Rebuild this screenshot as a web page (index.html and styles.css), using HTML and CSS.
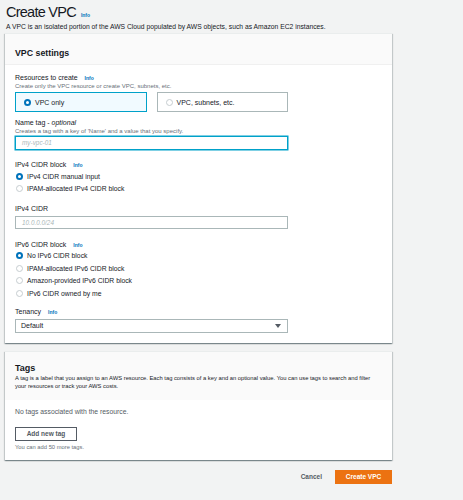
FILE: index.html
```html
<!DOCTYPE html>
<html>
<head>
<meta charset="utf-8">
<link rel="stylesheet" href="styles.css">
</head>
<body>
<div class="page">
  <div class="title-row">
    <h1 class="title">Create VPC</h1>
    <a class="info info-title">Info</a>
  </div>
  <p class="subtitle">A VPC is an isolated portion of the AWS Cloud populated by AWS objects, such as Amazon EC2 instances.</p>

  <section class="panel">
    <div class="panel-head">
      <h2 class="panel-title">VPC settings</h2>
    </div>
    <div class="panel-body">
      <div class="label">Resources to create <a class="info">Info</a></div>
      <div class="desc">Create only the VPC resource or create VPC, subnets, etc.</div>
      <div class="tiles">
        <div class="tile tile-on"><span class="radio on"></span>VPC only</div>
        <div class="tile"><span class="radio"></span>VPC, subnets, etc.</div>
      </div>

      <div class="label lbl-name">Name tag - <i>optional</i></div>
      <div class="desc">Creates a tag with a key of 'Name' and a value that you specify.</div>
      <div class="input input-focus">my-vpc-01</div>

      <div class="label lbl-ipv4">IPv4 CIDR block <a class="info">Info</a></div>
      <div class="radios r4">
        <div class="opt"><span class="radio on"></span>IPv4 CIDR manual input</div>
        <div class="opt"><span class="radio"></span>IPAM-allocated IPv4 CIDR block</div>
      </div>

      <div class="label lbl-cidr">IPv4 CIDR</div>
      <div class="input input-cidr">10.0.0.0/24</div>

      <div class="label lbl-ipv6">IPv6 CIDR block <a class="info">Info</a></div>
      <div class="radios r6">
        <div class="opt opt6"><span class="radio on"></span>No IPv6 CIDR block</div>
        <div class="opt opt6"><span class="radio"></span>IPAM-allocated IPv6 CIDR block</div>
        <div class="opt opt6"><span class="radio"></span>Amazon-provided IPv6 CIDR block</div>
        <div class="opt opt6"><span class="radio"></span>IPv6 CIDR owned by me</div>
      </div>

      <div class="label lbl-ten">Tenancy <a class="info">Info</a></div>
      <div class="select"><span>Default</span><span class="caret"></span></div>
    </div>
  </section>

  <section class="panel panel-tags">
    <div class="tags-head">
      <h2 class="tags-title">Tags</h2>
      <p class="tags-desc">A tag is a label that you assign to an AWS resource. Each tag consists of a key and an optional value. You can use tags to search and filter your resources or track your AWS costs.</p>
    </div>
    <div class="tags-body">
      <div class="empty">No tags associated with the resource.</div>
      <button class="btn-add">Add new tag</button>
      <div class="hint">You can add 50 more tags.</div>
    </div>
  </section>

  <div class="actions">
    <button class="btn-cancel">Cancel</button>
    <button class="btn-primary">Create VPC</button>
  </div>
</div>
</body>
</html>
```

FILE: styles.css
```css
* { box-sizing: border-box; }
html, body { margin: 0; padding: 0; }
body {
  background: #f2f3f3;
  font-family: "Liberation Sans", Arial, sans-serif;
  color: #16191f;
  width: 463px;
  height: 500px;
  overflow: hidden;
}
.page {
  width: 392px;
  padding: 2px 0 0 5px;
}
.title-row {
  display: flex;
  align-items: baseline;
  height: 20px;
  padding-left: 1px;
}
.title {
  margin: 0;
  font-size: 14.5px;
  line-height: 20px;
  font-weight: normal;
  letter-spacing: -0.75px;
  color: #16191f;
}
.info {
  color: #0073bb;
  font-weight: bold;
  font-size: 5px;
  margin-left: 3px;
}
.info-title { margin-left: 5px; }
.subtitle {
  margin: 0;
  padding-left: 1px;
  font-size: 6.75px;
  line-height: 9px;
  height: 9px;
  color: #16191f;
  white-space: nowrap;
}
.panel {
  margin-top: 2px;
  background: #fff;
  box-shadow: 0 1px 1px 0 rgba(0, 28, 36, 0.3), 1px 1px 1px 0 rgba(0, 28, 36, 0.15), -1px 1px 1px 0 rgba(0, 28, 36, 0.15);
  border-top: 1px solid #eaeded;
}
.panel-head {
  background: #fafafa;
  height: 31px;
  padding: 13px 10px 0;
  border-bottom: 1px solid #f0f0f0;
}
.panel-title {
  margin: 0;
  font-size: 8.8px;
  line-height: 12px;
  font-weight: bold;
}
.panel-body {
  padding: 8px 10px 10px;
}
.label {
  font-size: 7px;
  line-height: 9px;
  height: 9px;
  white-space: nowrap;
}
.label .info { margin-left: 5px; }
.desc {
  font-size: 6px;
  line-height: 8px;
  height: 8px;
  color: #687078;
  white-space: nowrap;
}
.tiles {
  display: flex;
  gap: 10px;
  margin-top: 2px;
  width: 273px;
}
.tile {
  flex: 1;
  height: 20px;
  border: 1px solid #aab7b8;
  display: flex;
  align-items: center;
  padding-left: 8px;
  font-size: 7px;
  background: #fff;
}
.tile-on {
  border-color: #00a1c9;
  background: #f1faff;
}
.radio {
  width: 7px;
  height: 7px;
  border-radius: 50%;
  border: 1px solid #c6cdd0;
  background: #fff;
  margin-right: 4px;
  flex: none;
}
.radio.on {
  border: 2px solid #0073bb;
}
.lbl-name { margin-top: 5.5px; }
.input {
  width: 273px;
  border: 1px solid #aab7b8;
  padding-left: 6px;
  display: flex;
  align-items: center;
  font-size: 6.4px;
  font-style: italic;
  color: #aab7b8;
  background: #fff;
}
.input-focus {
  margin-top: 1px;
  height: 14px;
  border-color: #00a1c9;
  box-shadow: 0 0 0 0.5px #00a1c9;
}
.lbl-ipv4 { margin-top: 10px; }
.radios.r4 { margin-top: 2px; }
.opt {
  height: 12px;
  display: flex;
  align-items: center;
  padding-left: 1px;
  font-size: 6.8px;
  white-space: nowrap;
}
.opt .radio { margin-right: 4px; }
.opt6 { height: 12.5px; }
.lbl-cidr { margin-top: 9px; }
.input-cidr {
  margin-top: 3px;
  height: 13px;
}
.lbl-ipv6 { margin-top: 11px; }
.radios.r6 { margin-top: 1px; }
.lbl-ten { margin-top: 7.5px; }
.select {
  margin-top: 2.5px;
  width: 273px;
  height: 14px;
  border: 1px solid #aab7b8;
  display: flex;
  align-items: center;
  justify-content: space-between;
  padding: 0 6px 0 5px;
  font-size: 7px;
}
.caret {
  width: 0;
  height: 0;
  border-left: 3px solid transparent;
  border-right: 3px solid transparent;
  border-top: 4px solid #545b64;
}
.panel-tags { margin-top: 8px; }
.tags-head {
  background: #fafafa;
  height: 48px;
  padding: 10px 16px 0 10px;
}
.tags-title {
  margin: 0;
  font-size: 9px;
  line-height: 12px;
  font-weight: bold;
}
.tags-desc {
  margin: 0;
  font-size: 5.8px;
  line-height: 8px;
  color: #16191f;
}
.tags-body {
  padding: 7.5px 10px 9px;
}
.empty {
  font-size: 6.8px;
  line-height: 9px;
  height: 9px;
  color: #545b64;
}
.btn-add {
  display: block;
  margin-top: 10.5px;
  width: 62px;
  height: 14px;
  border: 1px solid #545b64;
  background: #fff;
  color: #545b64;
  font-family: "Liberation Sans", Arial, sans-serif;
  font-weight: bold;
  font-size: 6.5px;
  padding: 0;
}
.hint {
  margin-top: 2px;
  font-size: 5.8px;
  line-height: 8px;
  height: 8px;
  color: #687078;
}
.actions {
  margin-top: 10px;
  display: flex;
  justify-content: flex-end;
  align-items: center;
  gap: 13px;
}
.btn-cancel {
  background: transparent;
  border: none;
  padding: 0;
  color: #545b64;
  font-family: "Liberation Sans", Arial, sans-serif;
  font-weight: bold;
  font-size: 6.5px;
}
.btn-primary {
  width: 57px;
  height: 14px;
  background: #ec7211;
  border: none;
  color: #fff;
  font-family: "Liberation Sans", Arial, sans-serif;
  font-weight: bold;
  font-size: 6.5px;
  padding: 0;
}
```
